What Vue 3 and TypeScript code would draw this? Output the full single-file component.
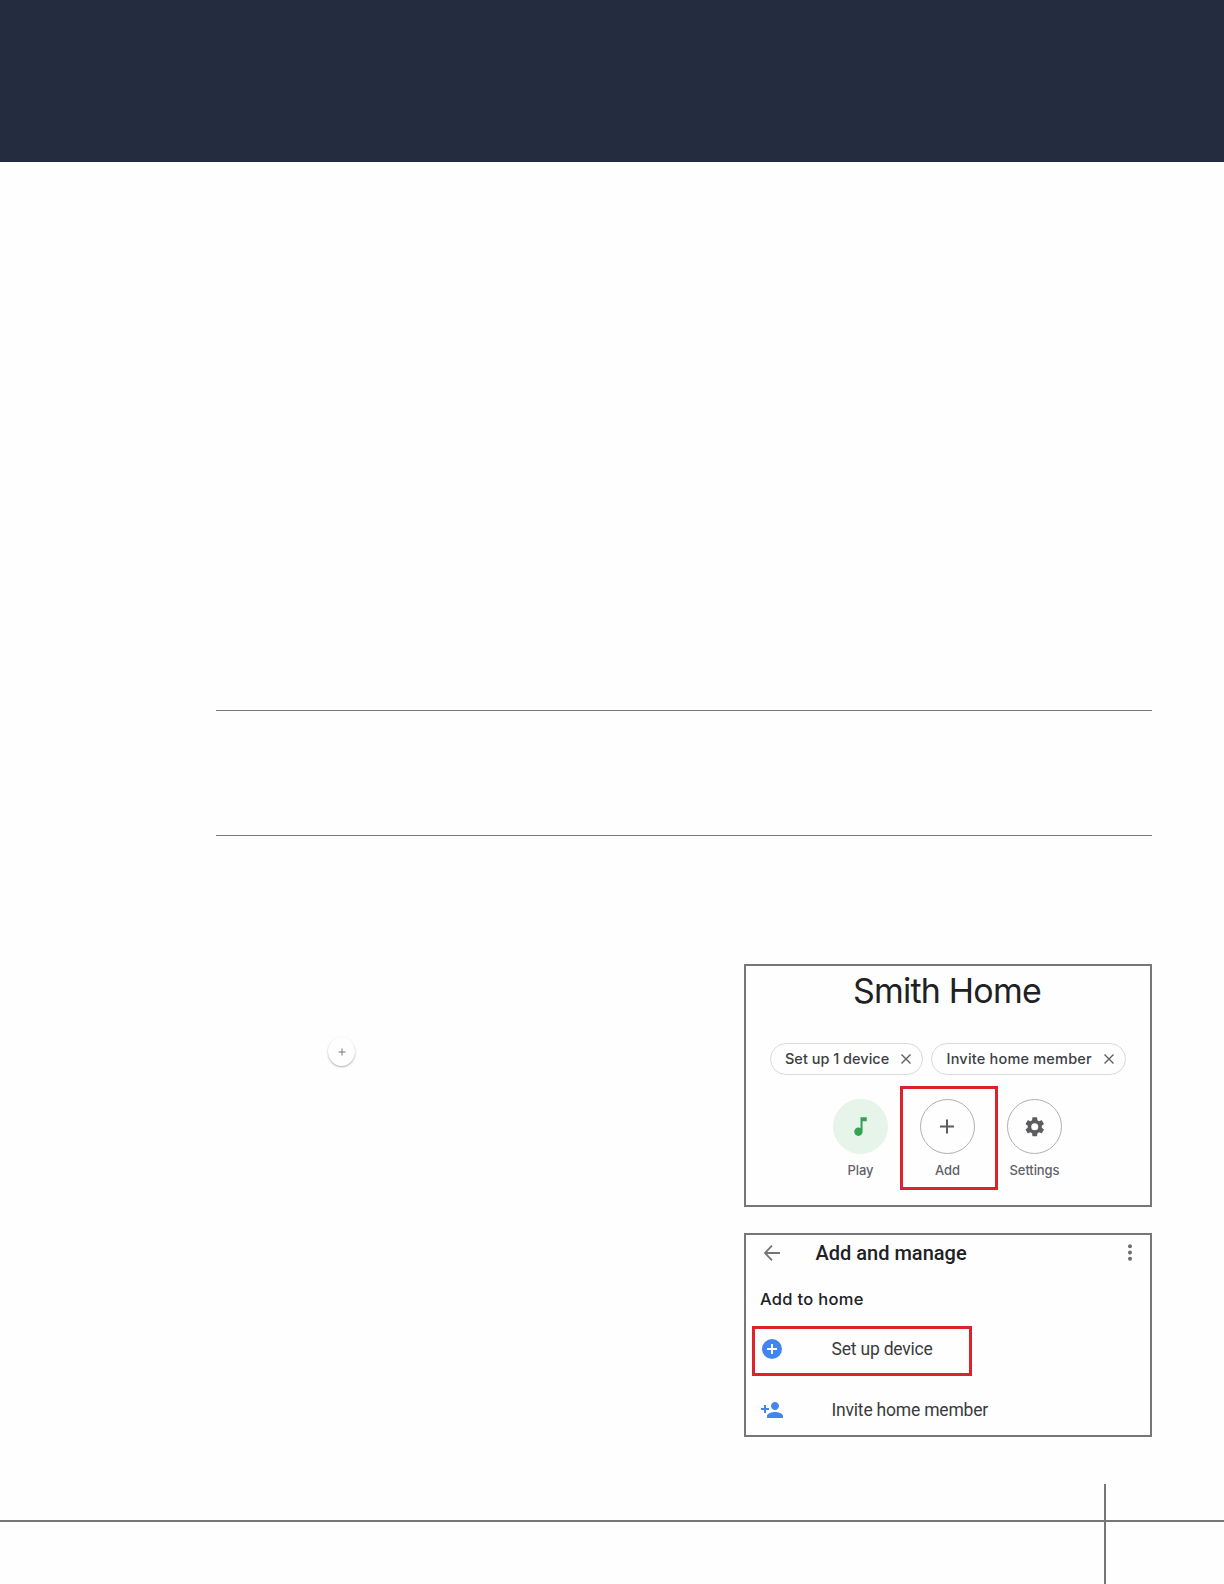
<script setup lang="ts">
interface Chip {
  id: 'chip-device' | 'chip-member'
  label: string
}

interface Action {
  id: 'play' | 'add' | 'settings'
  label: string
}

interface Row {
  id: 'device' | 'member'
  label: string
}

const chips: Chip[] = [
  { id: 'chip-device', label: 'Set up 1 device' },
  { id: 'chip-member', label: 'Invite home member' },
]

const actions: Action[] = [
  { id: 'play', label: 'Play' },
  { id: 'add', label: 'Add' },
  { id: 'settings', label: 'Settings' },
]

const rows: Row[] = [
  { id: 'device', label: 'Set up device' },
  { id: 'member', label: 'Invite home member' },
]
</script>

<template>
  <div class="page">
    <header class="banner"></header>
    <section class="note"></section>

    <main class="content">
      <div class="steps">
        <span class="fab">
          <svg width="8" height="8" viewBox="0 0 8 8">
            <path d="M4 .5v7M.5 4h7" stroke="#777" stroke-width="1" />
          </svg>
        </span>
      </div>

      <div class="figures">
        <figure class="card home">
          <h1>Smith Home</h1>
          <div class="chips">
            <div v-for="chip in chips" :key="chip.id" class="chip" :class="chip.id">
              <span>{{ chip.label }}</span>
              <svg width="10" height="10" viewBox="0 0 10 10">
                <path d="M.5.5l9 9M9.5.5l-9 9" stroke="#5f6063" stroke-width="1.4" />
              </svg>
            </div>
          </div>
          <div class="actions">
            <div v-for="action in actions" :key="action.id" class="action" :class="action.id">
              <div class="circle">
                <svg v-if="action.id === 'play'" width="25" height="25" viewBox="0 0 24 24">
                  <path
                    fill="#34a255"
                    d="M12 3v10.55c-.59-.34-1.27-.55-2-.55-2.21 0-4 1.79-4 4s1.79 4 4 4 4-1.79 4-4V7h4V3z"
                  />
                </svg>
                <svg v-else-if="action.id === 'add'" width="15" height="15" viewBox="0 0 15 15">
                  <path d="M7 .5v14M0 7.5h14" stroke="#5c5c5f" stroke-width="2" />
                </svg>
                <svg v-else width="23.5" height="23.5" viewBox="0 0 24 24">
                  <path
                    fill="#5c5c5f"
                    d="M19.14 12.94c.04-.3.06-.61.06-.94s-.02-.64-.07-.94l2.03-1.58a.49.49 0 0 0 .12-.61l-1.92-3.32a.49.49 0 0 0-.59-.22l-2.39.96a7.03 7.03 0 0 0-1.62-.94l-.36-2.54A.48.48 0 0 0 13.92 2.4h-3.84c-.24 0-.43.17-.47.41l-.36 2.54c-.59.24-1.13.57-1.62.94l-2.39-.96a.48.48 0 0 0-.59.22L2.74 8.87a.48.48 0 0 0 .12.61l2.03 1.58c-.05.3-.09.63-.09.94s.02.64.07.94l-2.03 1.58a.49.49 0 0 0-.12.61l1.92 3.32c.12.22.37.29.59.22l2.39-.96c.5.38 1.03.7 1.62.94l.36 2.54c.05.24.24.41.48.41h3.84c.24 0 .44-.17.47-.41l.36-2.54c.59-.24 1.13-.56 1.62-.94l2.39.96c.22.08.47 0 .59-.22l1.92-3.32a.48.48 0 0 0-.12-.61zM12 15.6a3.6 3.6 0 1 1 0-7.2 3.6 3.6 0 0 1 0 7.2z"
                  />
                </svg>
              </div>
              <span class="label">{{ action.label }}</span>
            </div>
          </div>
        </figure>

        <figure class="card manage">
          <div class="toolbar">
            <svg width="16" height="16" viewBox="0 0 16 16">
              <path d="M16 8H1.4M8 .7L.9 8 8 15.3" fill="none" stroke="#747474" stroke-width="1.8" />
            </svg>
            <h2>Add and manage</h2>
            <svg class="more" width="4" height="17" viewBox="0 0 4 17">
              <circle cx="2" cy="2.3" r="2" fill="#6c6c6c" />
              <circle cx="2" cy="8.5" r="2" fill="#6c6c6c" />
              <circle cx="2" cy="14.7" r="2" fill="#6c6c6c" />
            </svg>
          </div>
          <h3>Add to home</h3>
          <div v-for="row in rows" :key="row.id" class="row" :class="row.id">
            <svg v-if="row.id === 'device'" width="24" height="24" viewBox="0 0 24 24">
              <circle cx="12" cy="12" r="10" fill="#4285f0" />
              <path d="M12 7v10M7 12h10" stroke="#fff" stroke-width="2" />
            </svg>
            <svg v-else width="24" height="24" viewBox="0 0 24 24">
              <path
                fill="#4285f0"
                d="M15 12c2.21 0 4-1.79 4-4s-1.79-4-4-4-4 1.79-4 4 1.79 4 4 4zm-9-2V7H4v3H1v2h3v3h2v-3h3v-2H6zm9 4c-2.67 0-8 1.34-8 4v2h16v-2c0-2.66-5.33-4-8-4z"
              />
            </svg>
            <span>{{ row.label }}</span>
          </div>
        </figure>
      </div>
    </main>

    <footer class="footer">
      <div class="rule"></div>
      <div class="rule"></div>
    </footer>
  </div>
</template>

<style>
body {
  margin: 0;
  background: #fefefe;
}
</style>

<style scoped>
.page {
  box-sizing: border-box;
  width: 1224px;
  height: 1584px;
  display: flex;
  flex-direction: column;
  overflow: hidden;
  background: #fefefe;
  font-family: Inter, 'Liberation Sans', sans-serif;
}

.banner {
  height: 162px;
  flex: none;
  background: #242d40;
}

.note {
  box-sizing: border-box;
  flex: none;
  height: 126px;
  margin: 548px 72px 0 216px;
  border-top: 1px solid #777;
  border-bottom: 1px solid #777;
}

.content {
  display: flex;
  justify-content: space-between;
  margin: 128px 72px 0 216px;
}

.steps {
  padding: 73px 0 0 112px;
}

.fab {
  display: flex;
  align-items: center;
  justify-content: center;
  width: 27px;
  height: 29px;
  border-radius: 50%;
  background: #fefefe;
  box-shadow: 0 1px 2px rgba(0, 0, 0, 0.32);
}

.figures {
  display: flex;
  flex-direction: column;
  gap: 26px;
}

.card {
  box-sizing: border-box;
  width: 408px;
  margin: 0;
  border: 2px solid #777;
}

.home {
  height: 243px;
}

h1,
h2,
h3 {
  margin: 0;
  color: #202124;
}

h1 {
  padding-right: 2px;
  text-align: center;
  font-size: 34px;
  font-weight: 400;
  line-height: 49px;
  letter-spacing: -0.8px;
}

.chips {
  display: flex;
  gap: 8px;
  margin: 28px 0 0 23.5px;
}

.chip {
  box-sizing: border-box;
  display: flex;
  align-items: center;
  justify-content: space-between;
  width: 153.5px;
  height: 32px;
  padding: 0 11px 1px 14.5px;
  border: 1px solid #dadada;
  border-radius: 16px;
  color: #3c4043;
  font-size: 14.5px;
  font-weight: 500;
  white-space: nowrap;
}

.chip svg {
  position: relative;
  top: 0.5px;
}

.chip-member {
  width: 195px;
  letter-spacing: 0.2px;
}

.actions {
  display: flex;
  margin: 24px 0 0 71px;
}

.action {
  position: relative;
  display: flex;
  flex-direction: column;
  align-items: center;
  width: 87px;
}

.circle {
  box-sizing: border-box;
  display: flex;
  align-items: center;
  justify-content: center;
  width: 55px;
  height: 55px;
  border: 1px solid #b0b0b0;
  border-radius: 50%;
}

.play .circle {
  border-color: #e6f4ea;
  background: #e6f4ea;
}

.label {
  margin-top: 7px;
  color: #5f6368;
  font-size: 13px;
  font-weight: 500;
  line-height: 18px;
  letter-spacing: -0.1px;
}

.add::after {
  content: '';
  position: absolute;
  box-sizing: border-box;
  top: -13px;
  left: -4px;
  width: 98px;
  height: 104px;
  border: 3px solid #dc232b;
}

.manage {
  height: 204px;
  font-family: Roboto, 'Liberation Sans', sans-serif;
}

.toolbar {
  display: flex;
  align-items: center;
  height: 35px;
  padding: 0 18px;
}

h2 {
  margin-left: 35.5px;
  font-size: 20px;
  font-weight: 500;
  line-height: 36px;
}

.more {
  margin-left: auto;
}

h3 {
  margin: 18px 0 15px 14px;
  font-family: Inter, 'Liberation Sans', sans-serif;
  font-size: 16.5px;
  font-weight: 500;
  line-height: 23px;
  letter-spacing: 0.3px;
}

.row {
  box-sizing: border-box;
  display: flex;
  align-items: center;
  height: 50px;
  padding-left: 14px;
  color: #3a3b3d;
  font-size: 17.5px;
  letter-spacing: -0.2px;
}

.row span {
  margin-left: 47.5px;
}

.device {
  width: 220px;
  margin-left: 6px;
  padding: 0 0 5px 5px;
  border: 3px solid #dc232b;
}

.member {
  margin-top: 9px;
}

.footer {
  display: flex;
  flex: none;
  height: 100px;
  margin-top: auto;
}

.rule {
  box-sizing: border-box;
  width: 1104px;
  height: 38px;
  border-bottom: 2px solid #777;
}

.rule + .rule {
  flex: 1;
  width: auto;
}

.rule + .rule::before {
  content: '';
  display: block;
  width: 2px;
  height: 100px;
  background: #777;
}
</style>
